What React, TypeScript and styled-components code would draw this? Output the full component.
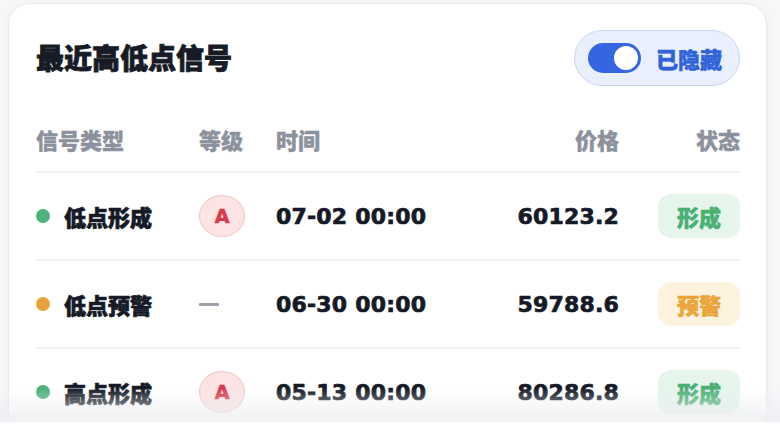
import React from "react";
import styled, { createGlobalStyle } from "styled-components";

const Global = createGlobalStyle`
  html, body { margin: 0; padding: 0; background: #ffffff; }
  body { font-family: "DejaVu Sans", "Noto Sans CJK SC", sans-serif; }
`;

const Frame = styled.div`
  position: relative;
  height: 422px;
  overflow: hidden;
  background: #f6f7f9;
  padding: 3px 13px 0 8px;
  box-sizing: border-box;
`;

const Card = styled.section`
  background: #ffffff;
  border: 1px solid #e8eaee;
  border-radius: 22px;
  box-shadow: 0 2px 10px rgba(20, 30, 50, 0.04);
  padding: 26px 26px 0 27px;
  box-sizing: border-box;
  height: 460px;
`;

const Fade = styled.div`
  position: absolute;
  left: 0;
  right: 0;
  bottom: 0;
  height: 34px;
  background: linear-gradient(to bottom, rgba(240, 241, 244, 0), rgba(236, 238, 241, 0.85));
  pointer-events: none;
`;

const TopBar = styled.div`
  display: flex;
  align-items: center;
  justify-content: space-between;
  height: 56px;
`;

const Title = styled.h2`
  margin: 0 0 2px;
  font-family: "Noto Sans CJK SC", sans-serif;
  font-size: 28px;
  font-weight: 900;
  color: #161b26;
  -webkit-text-stroke: 0.8px #161b26;
`;

const TogglePill = styled.button`
  display: flex;
  align-items: center;
  gap: 15px;
  height: 56px;
  width: 166px;
  box-sizing: border-box;
  padding: 0 0 0 13px;
  border-radius: 28px;
  border: 1.5px solid #c8d6f1;
  background: #e9effc;
  cursor: pointer;
`;

const Track = styled.span<{ $on: boolean }>`
  position: relative;
  width: 53px;
  height: 30px;
  border-radius: 15px;
  background: ${(p) => (p.$on ? "#3466e2" : "#c9ced8")};
  flex: none;
`;

const Knob = styled.span<{ $on: boolean }>`
  position: absolute;
  top: 3px;
  ${(p) => (p.$on ? "right: 3px;" : "left: 3px;")}
  width: 24px;
  height: 24px;
  border-radius: 50%;
  background: #ffffff;
`;

const ToggleText = styled.span`
  font-family: "Noto Sans CJK SC", sans-serif;
  font-size: 22px;
  font-weight: 900;
  color: #2f63da;
  -webkit-text-stroke: 0.5px #2f63da;
`;

const cols = "163px 77px 1fr 120px 121px";

const HeadRow = styled.div`
  display: grid;
  grid-template-columns: ${cols};
  align-items: center;
  margin-top: 37px;
  height: 30px;
  padding-bottom: 18px;
  border-bottom: 2px solid #edeff2;
`;

const HeadCell = styled.div<{ $right?: boolean }>`
  font-family: "Noto Sans CJK SC", sans-serif;
  font-size: 22px;
  font-weight: 900;
  color: #8c929d;
  -webkit-text-stroke: 0.4px #8c929d;
  text-align: ${(p) => (p.$right ? "right" : "left")};
`;

const Row = styled.div`
  display: grid;
  grid-template-columns: ${cols};
  align-items: center;
  height: 86px;
  border-bottom: 2px solid #eff1f4;
`;

const TypeCell = styled.div`
  display: flex;
  align-items: center;
  gap: 14px;
  font-family: "Noto Sans CJK SC", sans-serif;
  font-size: 22px;
  font-weight: 900;
  color: #151a26;
  -webkit-text-stroke: 0.7px #151a26;
`;

const Dot = styled.span<{ $color: string }>`
  width: 14px;
  height: 14px;
  border-radius: 50%;
  background: ${(p) => p.$color};
  flex: none;
`;

const LevelCell = styled.div`
  display: flex;
  align-items: center;
`;

const LevelBadge = styled.span`
  display: inline-flex;
  align-items: center;
  justify-content: center;
  width: 46px;
  height: 42px;
  box-sizing: border-box;
  border-radius: 50%;
  background: #fce3e4;
  border: 1.5px solid #f3c3c6;
  color: #d93a4b;
  font-family: "DejaVu Sans", sans-serif;
  font-weight: 700;
  font-size: 19px;
  -webkit-text-stroke: 0.6px #d93a4b;
`;

const Dash = styled.span`
  display: block;
  width: 20px;
  height: 3px;
  background: #9a9fa9;
  border-radius: 1px;
`;

const Mono = styled.div<{ $right?: boolean }>`
  font-family: "DejaVu Sans", sans-serif;
  font-size: 22px;
  font-weight: 700;
  color: #151a26;
  -webkit-text-stroke: 0.7px #151a26;
  text-align: ${(p) => (p.$right ? "right" : "left")};
  letter-spacing: 0.2px;
`;

const StatusCell = styled.div`
  display: flex;
  justify-content: flex-end;
`;

const StatusBadge = styled.span<{ $bg: string; $fg: string }>`
  display: inline-flex;
  align-items: center;
  justify-content: center;
  width: 82px;
  height: 44px;
  border-radius: 13px;
  background: ${(p) => p.$bg};
  color: ${(p) => p.$fg};
  -webkit-text-stroke: 0.5px ${(p) => p.$fg};
  font-family: "Noto Sans CJK SC", sans-serif;
  font-size: 22px;
  font-weight: 900;
`;

type Signal = {
  type: string;
  color: string;
  level: string | null;
  time: string;
  price: string;
  status: string;
  bg: string;
  fg: string;
};

const GREEN = "#4db17a";
const ORANGE = "#e9a53c";

const data: Signal[] = [
  { type: "低点形成", color: GREEN, level: "A", time: "07-02 00:00", price: "60123.2", status: "形成", bg: "#e5f5ec", fg: "#4caf74" },
  { type: "低点预警", color: ORANGE, level: null, time: "06-30 00:00", price: "59788.6", status: "预警", bg: "#fdf2dd", fg: "#eaa53a" },
  { type: "高点形成", color: GREEN, level: "A", time: "05-13 00:00", price: "80286.8", status: "形成", bg: "#e5f5ec", fg: "#4caf74" },
];

export default function App() {
  return (
    <>
      <Global />
      <Frame>
        <Card>
          <TopBar>
            <Title>最近高低点信号</Title>
            <TogglePill>
              <Track $on>
                <Knob $on />
              </Track>
              <ToggleText>已隐藏</ToggleText>
            </TogglePill>
          </TopBar>
          <HeadRow>
            <HeadCell>信号类型</HeadCell>
            <HeadCell>等级</HeadCell>
            <HeadCell>时间</HeadCell>
            <HeadCell $right>价格</HeadCell>
            <HeadCell $right>状态</HeadCell>
          </HeadRow>
          {data.map((s, i) => (
            <Row key={i}>
              <TypeCell>
                <Dot $color={s.color} />
                {s.type}
              </TypeCell>
              <LevelCell>{s.level ? <LevelBadge>{s.level}</LevelBadge> : <Dash />}</LevelCell>
              <Mono>{s.time}</Mono>
              <Mono $right>{s.price}</Mono>
              <StatusCell>
                <StatusBadge $bg={s.bg} $fg={s.fg}>{s.status}</StatusBadge>
              </StatusCell>
            </Row>
          ))}
        </Card>
        <Fade />
      </Frame>
    </>
  );
}
